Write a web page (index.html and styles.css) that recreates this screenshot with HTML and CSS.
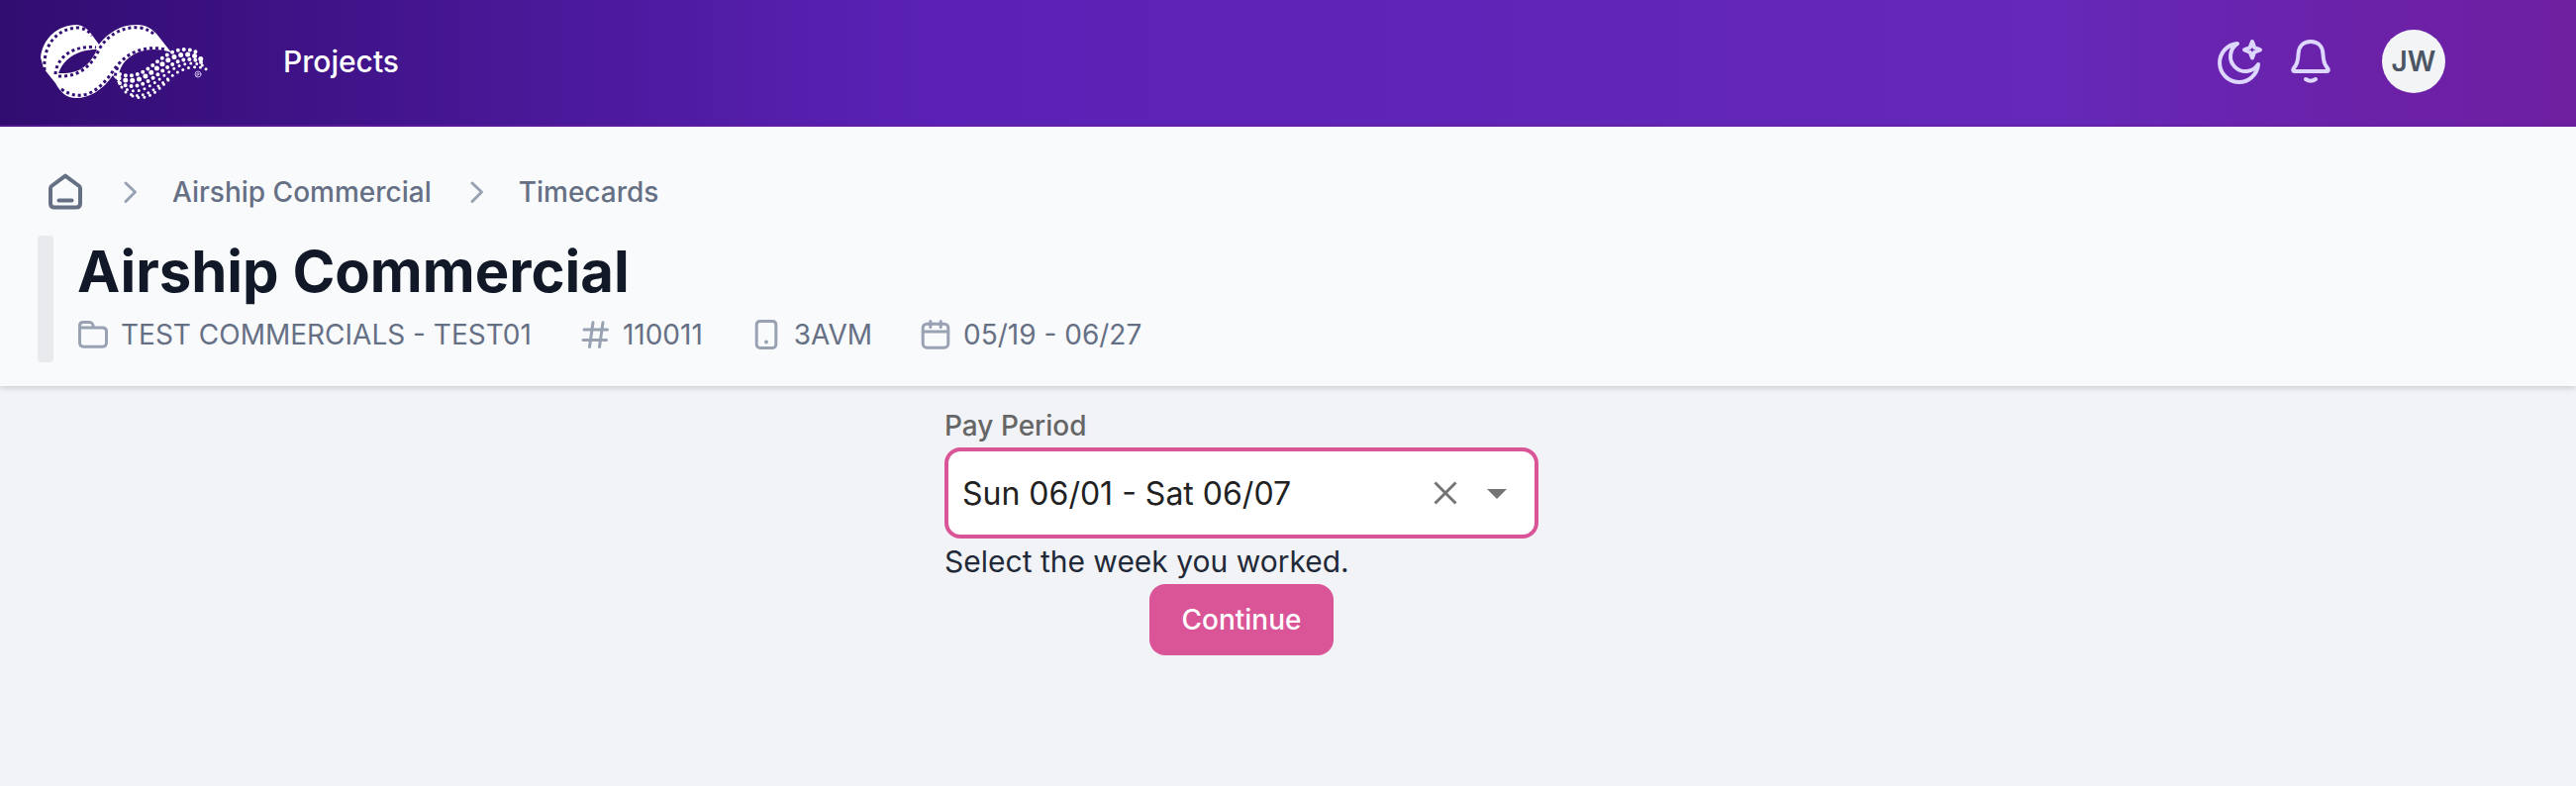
FILE: index.html
```html
<!DOCTYPE html>
<html lang="en">

<head>
    <meta charset="UTF-8">
    <meta name="viewport" content="width=device-width, initial-scale=1.0">
    <title>Airship Commercial - Timecards</title>
    <link rel="stylesheet" href="styles.css">
</head>

<body>
    <header class="navbar">
        <a href="#" class="logo" aria-label="Home">
            <svg viewBox="0 0 176 76" width="176" height="76">
                <defs>
                    <mask id="film">
                        <rect width="176" height="76" fill="#fff" />
                        <path class="perf" d="M5 47 C3 21 18 4 40 4 C46 5 50 8 53 12" />
                        <path class="perf" d="M16 51 C17 33 36 21 57 24" />
                        <path class="perf" d="M19 53 C40 54 53 42 60 26 C68 12 84 2 101 4 C108 5 113 8 117 12" />
                        <path class="perf" d="M22 66 C43 81 61 67 74 48 C86 30 104 21 128 26" />
                        <path class="perf" d="M79 44 C75 51 76 58 82 64" />
                    </mask>
                </defs>
                <!-- film ribbon -->
                <path class="ribbon" mask="url(#film)" fill-rule="evenodd" d="M1 34 C3 16 17 1 38 1 C45 2 49 6 52 10 L60 21 C67 12 79 1 98 1 C108 1 113 5 118 10 L133 29 C122 25 107 25 97 30 C87 35 82 42 80 51 C81 59 83 65 84 67 L74 52 C64 67 50 75 37 75 C27 75 21 69 16 60 L4 45 Z M19 50 C40 51 50 43 58 26 C37 26 24 36 19 50 Z" />
                <!-- dotted tail -->
                <path class="dots d3" d="M81 51 C110 60 121 24 149 26 C156 27 160 29 162 32" />
                <path class="dots d4" d="M80 55 C110 67 122 30 149 31 C157 32 162 34 164 37" />
                <path class="dots d3" d="M81 60 C110 74 124 36 151 36 C159 36 163 39 166 41" />
                <path class="dots d2" d="M83 64 C110 80 126 41 152 40 C159 40 163 41 168 44" />
                <path class="dots d2" d="M87 69 C112 84 127 47 154 44 C160 43 164 44 171 47" />
                <path class="dots d2" d="M94 73 C110 79 119 67 130 57" />
                <circle class="reg" cx="160" cy="51" r="3" />
                <path class="reg" d="M159 53 v-3 h2 v1 l-1 1" />
            </svg>
        </a>
        <nav>
            <a href="#" class="nav-link">Projects</a>
        </nav>
        <div class="nav-actions">
            <button class="icon-btn" aria-label="Dark mode">
                <svg viewBox="0 0 48 48" width="48" height="48">
                    <path d="M22 6 A19.5 19.5 0 1 0 43 27 A15.2 15.2 0 1 1 22 6 Z" />
                    <path d="M37 4 L39.2 10 L45 12.3 L39.2 14.6 L37 20.5 L34.6 14.6 L29 12.3 L34.6 10 Z" />
                </svg>
            </button>
            <button class="icon-btn" aria-label="Notifications">
                <svg viewBox="0 0 48 48" width="48" height="48">
                    <path d="M24 4 C16.5 4 12 9 11.6 16 C11.2 24 10 27 6.6 31.5 C5.8 32.8 6.2 34 7.6 34 H40.4 C41.8 34 42.2 32.8 41.4 31.5 C38 27 36.8 24 36.4 16 C36 9 31.5 4 24 4 Z" />
                    <path d="M19 42 Q24 45.5 29 42" />
                </svg>
            </button>
            <button class="avatar">JW</button>
        </div>
    </header>

    <section class="page-header">
        <nav class="breadcrumb" aria-label="Breadcrumb">
            <a href="#" class="home" aria-label="Home">
                <svg viewBox="0 0 40 40" width="40" height="40">
                    <path d="M20 3.6 L34 14 Q35 14.8 35 16.5 V31.5 Q35 35.5 31 35.5 H9 Q5 35.5 5 31.5 V16.5 Q5 14.8 6 14 Z" />
                    <path d="M13.5 28.5 H26.5" />
                </svg>
            </a>
            <svg class="chevron" viewBox="0 0 40 40" width="40" height="40"><path d="M17 11 L26.5 20 L17 29.5" /></svg>
            <a href="#">Airship Commercial</a>
            <svg class="chevron" viewBox="0 0 40 40" width="40" height="40"><path d="M17 11 L26.5 20 L17 29.5" /></svg>
            <a href="#">Timecards</a>
        </nav>

        <div class="project">
            <div class="project-bar"></div>
            <div class="project-info">
                <h1>Airship Commercial</h1>
                <ul class="meta">
                    <li>
                        <svg viewBox="0 0 32 32" width="32" height="32">
                            <path d="M2.5 9 V7 Q2.5 3.4 6 3.4 H12.5 Q14.5 3.4 15.3 5.2 L17 9 H25.5 Q29.5 9 29.5 13 V24 Q29.5 28.2 25.5 28.2 H6.5 Q2.5 28.2 2.5 24 Z H17" />
                        </svg>
                        TEST COMMERCIALS - TEST01
                    </li>
                    <li>
                        <svg viewBox="0 0 32 32" width="32" height="32">
                            <path d="M5 11 H28.5 M4 21.5 H27.5 M14 3.8 L10.5 28.5 M24 3.8 L20.5 28.5" />
                        </svg>
                        110011
                    </li>
                    <li>
                        <svg viewBox="0 0 32 32" width="32" height="32">
                            <rect x="6.2" y="2.4" width="19.6" height="27" rx="3.5" />
                            <circle class="dot" cx="16" cy="23.5" r="2" />
                        </svg>
                        3AVM
                    </li>
                    <li>
                        <svg viewBox="0 0 32 32" width="32" height="32">
                            <rect x="3.2" y="5.2" width="25.6" height="24" rx="4" />
                            <path d="M3.2 13 H28.8 M10.8 2.5 V8.5 M21.2 2.5 V8.5" />
                        </svg>
                        05/19 - 06/27
                    </li>
                </ul>
            </div>
        </div>
    </section>

    <main>
        <form class="period-form">
            <label for="payPeriod">Pay Period</label>
            <div class="field">
                <input type="text" id="payPeriod" role="combobox" aria-expanded="false" aria-describedby="payHelp" value="Sun 06/01 - Sat 06/07">
                <button type="button" class="field-btn" aria-label="Clear">
                    <svg viewBox="0 0 48 48" width="48" height="48"><path class="clear" d="M13.5 13.5 L34.5 34.5 M34.5 13.5 L13.5 34.5" /></svg>
                </button>
                <button type="button" class="field-btn" aria-label="Open">
                    <svg viewBox="0 0 48 48" width="48" height="48"><path class="caret" d="M14 20 H34 L24 30 Z" /></svg>
                </button>
            </div>
            <p id="payHelp">Select the week you worked.</p>
            <button type="button" class="continue">Continue</button>
        </form>
    </main>
</body>

</html>
```
FILE: styles.css
```css
:root {
    --bg-color: #f2f3f7;
    --panel-color: #f9fafc;
    --title-color: #111827;
    --text-muted: #667085;
    --icon-muted: #98a2b3;
    --accent: #da5597;
}

* {
    box-sizing: border-box;
}

body {
    margin: 0;
    min-height: 100vh;
    font-family: 'Inter', sans-serif;
    font-size: 28px;
    background: var(--bg-color);
}

a {
    color: inherit;
    text-decoration: none;
}

button {
    font-family: inherit;
    border: none;
    padding: 0;
    cursor: pointer;
}

svg {
    display: block;
    flex-shrink: 0;
    fill: none;
    stroke-linecap: round;
    stroke-linejoin: round;
}

/* Top bar */
.navbar {
    display: flex;
    align-items: center;
    height: 128px;
    padding: 0 132px 2px 40px;
    background: linear-gradient(90deg, #310c70 0%, #5b21b6 36%, #6528b8 80%, #6b21a8 92%, #6e1fa0 100%);
    border-bottom: 2px solid rgba(107, 33, 168, 0.5);
}

.ribbon {
    fill: #fff;
}

.perf {
    stroke: #000;
    stroke-width: 3;
    stroke-linecap: butt;
    stroke-dasharray: 3 3;
}

.dots {
    stroke: #fff;
}

.d2 {
    stroke-width: 3;
    stroke-dasharray: 0 6;
}

.d3 {
    stroke-width: 4;
    stroke-dasharray: 0 6;
}

.d4 {
    stroke-width: 5;
    stroke-dasharray: 0 7;
}

.reg {
    stroke: #c4b5e8;
    stroke-width: 1;
}

.nav-link {
    margin-left: 70px;
    color: #fff;
    font-size: 30px;
    font-weight: 500;
}

.nav-actions {
    display: flex;
    align-items: center;
    gap: 24px;
    margin-left: auto;
}

.icon-btn {
    background: none;
    stroke: #ddd6fe;
    stroke-width: 4;
}

.avatar {
    width: 64px;
    height: 64px;
    margin-left: 24px;
    border-radius: 50%;
    background: #f3f4f6;
    color: #4b5563;
    font-size: 28px;
    font-weight: 600;
}

/* Breadcrumb and project title */
.page-header {
    padding: 40px 38px 24px;
    background: var(--panel-color);
    box-shadow: 0 2px 6px rgba(0, 0, 0, 0.16);
}

.breadcrumb {
    display: flex;
    align-items: center;
    gap: 24px;
    height: 52px;
    padding-left: 8px;
    color: var(--text-muted);
    font-weight: 500;
}

.home {
    stroke: var(--text-muted);
    stroke-width: 4;
}

.chevron {
    stroke: var(--icon-muted);
    stroke-width: 3;
}

.project {
    display: flex;
    gap: 24px;
    margin-top: 18px;
}

.project-bar {
    width: 16px;
    border-radius: 4px;
    background: #e9eaee;
}

.project-info {
    padding-bottom: 8px;
}

h1 {
    margin: 0 0 8px;
    color: var(--title-color);
    font-size: 58px;
    font-weight: 700;
    line-height: 72px;
}

.meta {
    display: flex;
    flex-wrap: wrap;
    gap: 0 48px;
    margin: 0;
    padding: 0;
    list-style: none;
    color: var(--text-muted);
    line-height: 40px;
}

.meta li {
    display: flex;
    align-items: center;
    gap: 12px;
}

.meta svg {
    stroke: var(--icon-muted);
    stroke-width: 3;
}

.meta .dot {
    fill: var(--icon-muted);
    stroke: none;
}

/* Pay period form */
main {
    display: flex;
    justify-content: center;
    padding: 20px 94px 40px 0;
}

.period-form {
    display: flex;
    flex-direction: column;
    width: 600px;
}

label {
    color: #666;
    font-weight: 500;
    line-height: 40px;
}

.field {
    display: flex;
    align-items: center;
    height: 92px;
    margin-top: 2px;
    padding: 0 14px;
    border: 4px solid var(--accent);
    border-radius: 16px;
    background: #fff;
}

.field input {
    flex: 1;
    min-width: 0;
    padding: 0;
    border: none;
    outline: none;
    background: none;
    color: #212121;
    font-family: inherit;
    font-size: 32px;
}

.field-btn {
    margin-left: 4px;
    background: none;
}

.clear {
    stroke: #757575;
    stroke-width: 3;
    stroke-linecap: butt;
}

.caret {
    fill: #757575;
}

.period-form p {
    margin: 0;
    color: #1f2937;
    font-size: 30px;
    line-height: 46px;
}

.continue {
    align-self: center;
    padding: 0 32px;
    border-radius: 16px;
    background: var(--accent);
    color: #fff;
    font-size: 28px;
    font-weight: 500;
    line-height: 72px;
}
```
